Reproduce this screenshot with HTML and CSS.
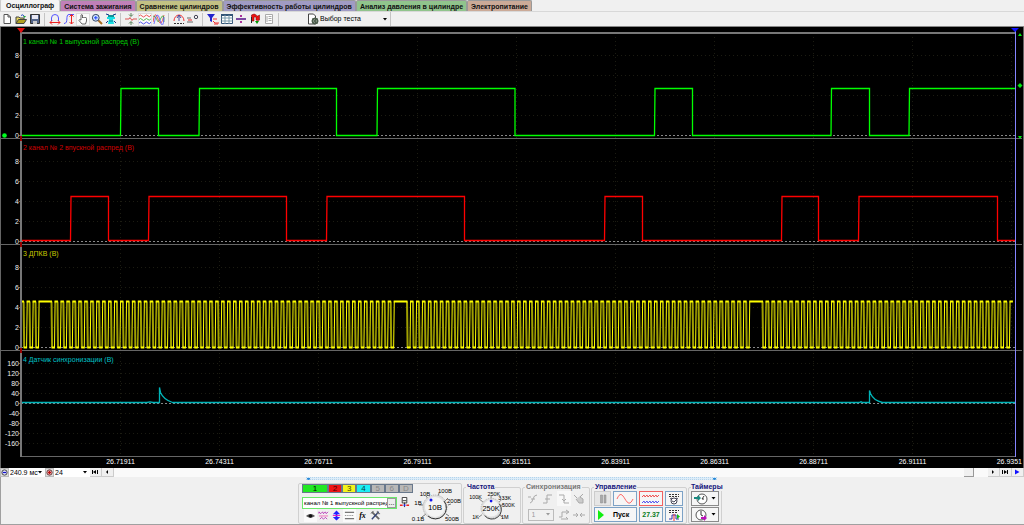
FILE: index.html
```html
<!DOCTYPE html>
<html lang="ru">
<head>
<meta charset="utf-8">
<title>Осциллограф</title>
<link rel="stylesheet" href="styles.css">
</head>
<body>
<nav class="tabs">
  <a href="#scope" class="tab tab-active">Осциллограф</a>
  <a href="#ignition" class="tab tab-pink">Система зажигания</a>
  <a href="#compare" class="tab tab-olive">Сравнение цилиндров</a>
  <a href="#efficiency" class="tab tab-violet">Эффективность работы цилиндров</a>
  <a href="#pressure" class="tab tab-green">Анализ давления в цилиндре</a>
  <a href="#power" class="tab tab-brown">Электропитание</a>
</nav>

<div class="toolbar">
  <div class="tool-group">
    <button class="tool" aria-label="Новый"><svg viewBox="0 0 12 12"><path d="M3 1.5h4l2.500 2.500v6.500H3z" fill="#fff" stroke="#555"/><path d="M7 1.500V4h2.500" fill="none" stroke="#555"/></svg></button>
    <button class="tool" aria-label="Открыть"><svg viewBox="0 0 12 12"><path d="M1 10.500V4h3l1 1h4v2" fill="#e8d860" stroke="#444"/><path d="M1 10.500L3.500 6.500H11.500L9 10.500z" fill="#b0a020" stroke="#444"/><path d="M6 2.500q2-2 3.500 1" fill="none" stroke="#2a50c0"/><path d="M8 3h3l-1.500 2z" fill="#20a040"/></svg></button>
    <button class="tool" aria-label="Сохранить"><svg viewBox="0 0 12 12"><path d="M1.500 1.500h9v9h-9z" fill="#53658a" stroke="#333"/><path d="M3 2h6v4H3z" fill="#e8e8f4"/><path d="M4 8h4v3H4z" fill="#ccc"/></svg></button>
  </div>
  <div class="tool-group">
    <button class="tool" aria-label="Горизонтальный масштаб"><svg viewBox="0 0 12 12"><path d="M2.500 8V5a3.500 3.500 0 0 1 7 0v3" fill="none" stroke="#55f"/><path d="M1 9.500h10M3 7.500l-2 2 2 2M9 7.500l2 2-2 2" fill="none" stroke="#e22"/></svg></button>
    <button class="tool" aria-label="Вертикальный масштаб"><svg viewBox="0 0 12 12"><path d="M1 10.500c5 0 1-9 5-9h5" fill="none" stroke="#55f"/><path d="M8.500 2v9M6.500 3.500l2-2 2 2M6.500 9l2 2 2-2" fill="none" stroke="#e22"/></svg></button>
    <button class="tool tool-pressed" aria-label="Рука"><svg viewBox="0 0 12 12"><path d="M4 7V2q1-1 1.500 0v3l1-1 1 1 1-1 1 1.500V8l-1 3H5L2 7.500q0-1.500 2-.5z" fill="#fff" stroke="#444" stroke-width=".8"/></svg></button>
    <button class="tool" aria-label="Лупа"><svg viewBox="0 0 12 12"><path d="M7 7l4 4" stroke="#a86b20" stroke-width="2"/><circle cx="4.800" cy="4.800" r="3.400" fill="#cfe6ff" stroke="#346"/><path d="M3 4.800h3.600M4.800 3v3.600" stroke="#24f"/></svg></button>
    <button class="tool" aria-label="Измерение"><svg viewBox="0 0 12 12"><path d="M1 1l3 1M11 1L8 2M1 10l2-2M11 10L9 8" stroke="#138"/><path d="M2 4h8v2H8l1 5H3l1-5H2z" fill="#19dfe5"/><path d="M3 2h6v2H3z" fill="#149298"/><path d="M4 8h4" stroke="#147a90"/></svg></button>
  </div>
  <div class="tool-group">
    <button class="tool" aria-label="Центрировать"><svg viewBox="0 0 12 12"><path d="M0 6h4l1-1.500 2 3L8 6h4" fill="none" stroke="#d55"/><path d="M6 0v3M4 1.500l2 2 2-2M6 12V9M4 10.500l2-2 2 2" fill="none" stroke="#363" stroke-width=".8"/></svg></button>
    <button class="tool tool-pressed" aria-label="Раздельно"><svg viewBox="0 0 12 12"><path d="M0 3q1.500-2 3 0t3 0 3 0 3-1" fill="none" stroke="#e55"/><path d="M0 6.500q1.500-2 3 0t3 0 3 0 3-1" fill="none" stroke="#5b5"/><path d="M0 10q1.500-2 3 0t3 0 3 0 3-1" fill="none" stroke="#55e"/></svg></button>
    <button class="tool" aria-label="Совместно"><svg viewBox="0 0 12 12"><g fill="none" stroke-width=".8"><path d="M0 9Q2-4 5 6t6-4" stroke="#e33"/><path d="M0 3q3 0 4 4t4-2 3 4" stroke="#3a3"/><path d="M1 11Q4-5 7 7t4-3" stroke="#55f"/></g></svg></button>
  </div>
  <div class="tool-group">
    <button class="tool" aria-label="Пик"><svg viewBox="0 0 12 12"><path d="M1 8a5 6 0 0 1 10 0" fill="none" stroke="#e33"/><path d="M6 2v6M4 5l2-3 2 3" fill="none" stroke="#449"/><path d="M1 10.500h10" stroke="#333" stroke-dasharray="2 1"/></svg></button>
    <button class="tool" aria-label="Ноль"><svg viewBox="0 0 12 12"><path d="M0 5h4M0 9h6" stroke="#444" stroke-width=".8"/><path d="M1 7h4" stroke="#e22"/><circle cx="9" cy="4" r="1.700" fill="none" stroke="#445"/></svg></button>
  </div>
  <div class="tool-group">
    <button class="tool" aria-label="Фильтр"><svg viewBox="0 0 12 12"><path d="M0 1h8L5 5v4L3 8V5z" fill="#22c"/><path d="M6 6h4M6 8l2 2h4M7 11h4" fill="none" stroke="#e33"/></svg></button>
    <button class="tool" aria-label="Таблица"><svg viewBox="0 0 12 12"><path d="M.5 1.500h11v9H.5z" fill="#fff" stroke="#357"/><path d="M0 2h12" stroke="#357" stroke-width="2"/><path d="M.5 5h11M.5 8h11M4 2v9M8 2v9" stroke="#79a"/></svg></button>
    <button class="tool" aria-label="Разделитель"><svg viewBox="0 0 12 12"><path d="M1 6h10" stroke="#518" stroke-width="1.500"/><path d="M6 2v2M6 8v2" stroke="#a39" stroke-width="2"/></svg></button>
    <button class="tool" aria-label="Метка"><svg viewBox="0 0 12 12"><path d="M2.500 8V2q3-2 4.500 0t3.500 0v5q-2 1-3.500 0V4H5v4z" fill="#e11" stroke="#811" stroke-width=".6"/><path d="M2.500 4v6" stroke="#222"/><path d="M6 8h4l-2 3z" fill="#090"/></svg></button>
    <button class="tool" aria-label="Отчёт"><svg viewBox="0 0 12 12"><path d="M2.500 1.500h7v9h-7z" fill="#fff" stroke="#aaa"/><path d="M5.500 3.500h3M5.500 5.500h3M5.500 7.500h3M4 3v6" stroke="#aaa"/></svg></button>
  </div>
  <div class="test-picker">
    <svg class="test-icon" viewBox="0 0 12 12"><path d="M1.500 1h5l2 2v8h-7z" fill="#fff" stroke="#444"/><circle cx="8" cy="8" r="2.500" fill="none" stroke="#454" stroke-width="1.500"/><path d="M8 4.500v7M4.500 8h7M5.500 5.500l5 5M10.500 5.500l-5 5" stroke="#565"/></svg>
    <span class="pick pick-test">
      <select class="plain-select" aria-label="Выбор теста"><option>Выбор теста</option></select>
      <svg class="caret" viewBox="0 0 4 3"><path d="M0 0h4L2 2.500z"/></svg>
    </span>
  </div>
</div>

<main class="scope" id="scope">
  <svg class="plot" id="plot" viewBox="0 0 1024 441" role="img" aria-label="Осциллограмма"></svg>
</main>

<div class="timebar">
  <button class="zoom-btn" aria-label="Уменьшить"><svg viewBox="0 0 8 8"><circle cx="4" cy="4" r="3" fill="#eef" stroke="#333"/><path d="M2 4h4" stroke="#11c" stroke-width="1.500"/></svg></button>
  <span class="pick pick-span"><select class="plain-select" aria-label="Развёртка"><option>240.9 мс</option></select><svg class="caret" viewBox="0 0 4 3"><path d="M0 0h4L2 2.500z"/></svg></span>
  <button class="zoom-btn" aria-label="Увеличить"><svg viewBox="0 0 8 8"><circle cx="4" cy="4" r="3" fill="#fdd" stroke="#522"/><path d="M2 4h4M4 2v4" stroke="#b11" stroke-width="1.500"/></svg></button>
  <span class="pick pick-span"><select class="plain-select" aria-label="Масштаб"><option>24</option></select><svg class="caret" viewBox="0 0 4 3"><path d="M0 0h4L2 2.500z"/></svg></span>
  <button class="nav-btn" aria-label="В начало"><svg viewBox="0 0 8 8"><path d="M1.500 2v4" stroke="#000"/><path d="M5 2L2 4l3 2z"/><path d="M6.500 2v4" stroke="#000"/></svg></button>
  <button class="nav-btn" aria-label="Назад"><svg viewBox="0 0 8 8"><path d="M5 2L3 4l2 2z"/></svg></button>
  <div class="track"><button class="thumb" aria-label="Положение"></button></div>
  <button class="nav-btn" aria-label="Вперёд"><svg viewBox="0 0 8 8"><path d="M3 2l2 2-2 2z"/></svg></button>
  <button class="nav-btn" aria-label="В конец"><svg viewBox="0 0 8 8"><path d="M1.500 2v4M6.500 2v4" stroke="#000"/><path d="M3 2l3 2-3 2z"/></svg></button>
  <button class="nav-btn" aria-label="Воспроизвести"><svg viewBox="0 0 8 8"><path d="M2 1.500L6.500 4 2 6.500z" fill="#11f"/></svg></button>
</div>

<footer class="dock">
  <div class="panels-wrap">
    <div class="grip"><i class="grip-mark"></i><i class="grip-mark"></i></div>
    <div class="panels">
      <section class="panel channel-panel">
        <div class="channel-left">
          <div class="channels">
            <button class="ch ch1">1</button><button class="ch ch2">2</button><button class="ch ch3">3</button><button class="ch ch4">4</button><button class="ch" disabled>5</button><button class="ch" disabled>6</button><button class="ch" disabled>D</button>
          </div>
          <div class="name-row">
            <div class="name-box">
              <input class="name-input" aria-label="Имя канала" value="канал № 1 выпускной распред">
              <button class="more">...</button>
            </div>
            <button class="mini" aria-label="Датчик"><svg viewBox="0 0 12 12"><path d="M3.500.5h5v6h-5z" fill="#fff" stroke="#333"/><path d="M4 4h4" stroke="#333"/><path d="M6 6v5" stroke="#333"/><path d="M1 9h3M8 9h3" stroke="#e22" stroke-width="1.500"/><path d="M5 9h2" stroke="#22e" stroke-width="2"/></svg></button>
          </div>
          <div class="mini-row">
            <button class="mini mini-on" aria-label="Видимость"><svg viewBox="0 0 12 12"><path d="M1 6.500q5-4.500 10 0-5 4-10 0z" fill="#555"/><circle cx="6" cy="6.500" r="2" fill="#111"/></svg></button>
            <button class="mini" aria-label="Сглаживание"><svg viewBox="0 0 12 12"><g fill="none" stroke-width=".8"><path d="M1 4V2l2 2 2-2 1 2 2-2 1 2 2-2" stroke="#a1a"/><path d="M1 6.500h10" stroke="#e4a"/><path d="M2 10l2-2 2 2 2-2 2 2" stroke="#a1a"/></g></svg></button>
            <button class="mini" aria-label="Инверсия"><svg viewBox="0 0 12 12"><path d="M2 4.500L6 .5l4 4zM2 7.500l4 4 4-4z" fill="#22f"/><path d="M6 2v8" stroke="#22f" stroke-width="2"/><path d="M2 6h8" stroke="#e1b"/></svg></button>
            <button class="mini mini-on" aria-label="Уровни"><svg viewBox="0 0 12 12"><path d="M1 2.500h10M1 9.500h10" stroke="#444"/><path d="M1 6h10" stroke="#777" stroke-dasharray="1 1"/></svg></button>
            <button class="mini fx">fx</button>
            <button class="mini" aria-label="Настройки"><svg viewBox="0 0 12 12"><path d="M2 2l8 8" stroke="#666" stroke-width="2"/><path d="M9.500 2L2 10" stroke="#347" stroke-width="1.500"/><path d="M1 4l3-3M8 1v3h3" fill="none" stroke="#666"/></svg></button>
          </div>
        </div>
        <svg class="dial" viewBox="0 0 48 38" role="img" aria-label="Диапазон 10В">
          <g class="dial-ticks"><path d="M9 32l4-3M6 20h4M13 11l3 4M26 8l-1 4M35 13l-3 3M38 19l-3 1M36 31l-3-2"/></g>
          <circle class="knob-rim" cx="22" cy="22" r="12"/><circle class="knob" cx="22" cy="22" r="10"/>
          <path class="knob-shade" d="M31 16a11 11 0 0 1-16 15"/>
          <circle class="pointer" cx="18" cy="15" r="1.500"/>
          <text x="22" y="25" class="dial-value">10В</text>
          <text x="5" y="36">0.1В</text><text x="5" y="20">1В</text><text x="12" y="11">10В</text><text x="32" y="8">100В</text><text x="41" y="18">200В</text><text x="39" y="36">500В</text>
        </svg>
      </section>

      <fieldset class="panel rate-panel">
        <legend>Частота</legend>
        <svg class="dial dial-rate" viewBox="0 0 52 34" role="img" aria-label="Частота 250K">
          <g class="dial-ticks"><path d="M11 29l4-3M11 8l5 4M25 5v4M36 10l-3 3M39 15l-4 1M38 29l-4-3"/></g>
          <circle class="knob-rim" cx="25" cy="19" r="11"/><circle class="knob" cx="25" cy="19" r="9"/>
          <path class="knob-shade" d="M34 14a10 10 0 0 1-16 13"/>
          <circle class="pointer" cx="25" cy="11" r="1.500"/>
          <text x="25" y="22" class="dial-value">250K</text>
          <text x="8" y="31">1K</text><text x="8" y="9">100K</text><text x="28" y="5">250K</text><text x="40" y="10">333K</text><text x="44" y="17">500K</text><text x="40" y="31">1M</text>
        </svg>
      </fieldset>

      <fieldset class="panel sync-panel" disabled>
        <legend>Синхронизация</legend>
        <div class="sync-grid">
          <button class="sync" aria-label="Авто"><svg viewBox="0 0 12 12"><path d="M1 4h3M3 10q2 0 3-4t4-4M4 6h4" fill="none" stroke="#aaa"/></svg></button>
          <button class="sync" aria-label="Фронт"><svg viewBox="0 0 12 12"><path d="M1 10h4V2h5M3 6h5" fill="none" stroke="#aaa"/></svg></button>
          <button class="sync sync-on" aria-label="Спад"><svg viewBox="0 0 12 12"><path d="M1 2h5v8h5M4 6l2 2 2-2" fill="none" stroke="#aaa"/></svg></button>
          <button class="sync" aria-label="Ручной"><svg viewBox="0 0 12 12"><path d="M1 2l3 3M3 6l3 4h4V6L7 4l3-3" fill="#ccc" stroke="#aaa"/></svg></button>
          <span class="pick pick-sync"><select class="plain-select sync-select" aria-label="Канал синхронизации"><option>1</option></select><svg class="caret caret-off" viewBox="0 0 4 3"><path d="M0 0h4L2 2.500z"/></svg></span>
          <button class="sync" aria-label="Уровень"><svg viewBox="0 0 12 12"><path d="M1 8h3V3h6M8 1l3 2-3 2M3 10h7M8 8l2 2" fill="none" stroke="#aaa"/></svg></button>
          <button class="sync" aria-label="Положение"><svg viewBox="0 0 12 12"><path d="M0 6h5M7 6h5M3 4l2 2-2 2M9 4L7 6l2 2" fill="none" stroke="#aaa"/></svg></button>
        </div>
      </fieldset>

      <fieldset class="panel control-panel">
        <legend>Управление</legend>
        <div class="control-grid">
          <button class="btn btn-off" aria-label="Пауза"><svg viewBox="0 0 12 10"><path d="M3.500 1h2v8h-2zM7 1h2v8H7z" fill="#aaa" stroke="#888" stroke-width=".5"/></svg></button>
          <button class="btn btn-blue" aria-label="Один сигнал"><svg class="wide" viewBox="0 0 20 12"><path d="M2 6c3-7 5-5 8 0s5 6 8 0" fill="none" stroke="#f66"/></svg></button>
          <button class="btn btn-red" aria-label="Два сигнала"><svg class="wide" viewBox="0 0 20 12"><path d="M1 4l2-2 1 2 2-2 1 2 2-2 1 2 2-2 1 2 2-2 1 2 2-2" fill="none" stroke="#e55"/><path d="M1 10l2-2 1 2 2-2 1 2 2-2 1 2 2-2 1 2 2-2 1 2 2-2" fill="none" stroke="#55e"/></svg></button>
          <button class="btn btn-blue" aria-label="Авто"><svg viewBox="0 0 12 12"><path d="M1 1.500h10M1 3.500h10" stroke="#333" stroke-dasharray="2 1"/><circle cx="6" cy="8" r="3" fill="#fff" stroke="#445"/><path d="M2 6l2-1M10 6L8 5M4 8l2 1 2-2" fill="none" stroke="#445"/></svg></button>
          <button class="btn btn-blue start"><svg viewBox="0 0 10 12"><path d="M2 1l6 5-6 5z" fill="#1e1"/></svg><span>Пуск</span></button>
          <output class="btn btn-blue clock">27.37</output>
          <button class="btn btn-blue" aria-label="Авто фронт"><svg viewBox="0 0 12 12"><path d="M1 1.500h10M1 3.500h8" stroke="#333" stroke-dasharray="2 1"/><path d="M1 10h3V6h4v4h3" fill="none" stroke="#33a"/><path d="M6 5v7" stroke="#e33"/><path d="M9 5l3 2.500L9 10z" fill="#1b1"/></svg></button>
        </div>
      </fieldset>

      <fieldset class="panel timer-panel">
        <legend>Таймеры</legend>
        <div class="timer-list">
          <button class="btn timer" aria-label="Таймер 1"><svg viewBox="0 0 14 12"><circle cx="8" cy="6" r="5" fill="#fff" stroke="#555"/><path d="M8 6l2-3M8 6h2" stroke="#333"/><path d="M0 4h4V2l3 3-3 3V6H0z" fill="#1a8a80"/></svg><svg class="caret" viewBox="0 0 4 3"><path d="M0 0h4L2 2.500z"/></svg></button>
          <button class="btn timer" aria-label="Таймер 2"><svg viewBox="0 0 14 12"><circle cx="7" cy="6" r="5" fill="#fff" stroke="#555"/><path d="M7 6V2M7 6l2 1" stroke="#333"/><path d="M7 8h3V6l3 3-3 3v-2H7z" fill="#b1b"/></svg><svg class="caret" viewBox="0 0 4 3"><path d="M0 0h4L2 2.500z"/></svg></button>
        </div>
      </fieldset>
    </div>
  </div>
</footer>
<script src="scope.js"></script>
</body>
</html>
```
FILE: styles.css
```css
* { box-sizing: border-box; }

body {
  margin: 0;
  min-height: 100vh;
  display: flex;
  flex-direction: column;
  background: #f0f0f0;
  color: #000;
  font: 7px/8px "Liberation Sans", Arial, sans-serif;
}

button, select, input {
  margin: 0;
  padding: 0;
  border: 0;
  border-radius: 0;
  background: none;
  color: inherit;
  font: inherit;
}

svg { display: block; fill: #000; }

.tabs {
  display: flex;
  align-items: flex-end;
  height: 12px;
  background: #f0f0f0;
  border-bottom: 1px solid #d8d8d8;
}
.tab {
  height: 11px;
  padding: 0 3px;
  border: 1px solid #999;
  border-bottom: 0;
  border-radius: 2px 2px 0 0;
  color: #111;
  font: bold 7px/11px "Liberation Sans", Arial, sans-serif;
  text-decoration: none;
  white-space: nowrap;
}
.tab-active { height: 12px; padding: 0 5px; background: #f4f4f4; border-color: #ccc; }
.tab-pink { background: #c080b8; }
.tab-olive { background: #c3c183; }
.tab-violet { background: #a09bc4; }
.tab-green { background: #90c48c; }
.tab-brown { background: #cbaa97; }

.toolbar {
  display: flex;
  align-items: center;
  height: 15px;
  border-bottom: 1px solid #888;
}
.tool-group {
  display: flex;
  padding-right: 2px;
  border-right: 1px solid #c4c4c4;
  margin-right: 3px;
}
.tool { width: 14px; height: 13px; padding: 0 1px; }
.tool svg { width: 12px; height: 12px; }
.tool-pressed { background: #fafafa; outline: 1px solid #ddd; outline-offset: -1px; }
.test-picker {
  display: flex;
  align-items: center;
  gap: 1px;
  height: 14px;
  padding-left: 25px;
  border-right: 1px solid #c4c4c4;
}
.test-icon { width: 12px; height: 12px; }

.pick { display: grid; align-items: center; }
.pick > * { grid-area: 1 / 1; }
.plain-select { appearance: none; width: 100%; height: 9px; }
.caret { width: 4px; height: 3px; justify-self: end; margin-right: 3px; pointer-events: none; }
.caret-off { fill: #999; }
.pick-test { width: 70px; }

.scope { background: #000; }
.plot { width: 100%; height: auto; font-family: "Liberation Sans", Arial, sans-serif; font-size: 7px; }
.crisp { shape-rendering: crispEdges; }
.grid-line { stroke: #1c1c12; stroke-dasharray: 1 3; }
.zero-line { stroke: #888; stroke-dasharray: 2 2; }
.frame-line { stroke: #666; }
.axis { stroke: #777; stroke-width: 2; }
.cursor { stroke: #8484ff; }
.scale { fill: #eee; text-anchor: end; }
.time { fill: #fff; text-anchor: middle; }
.time-last { fill: #fff; text-anchor: end; }
.wave { fill: none; }
.wave-fall { stroke: #a0a000; stroke-width: 2; }
.wave-rise { stroke: #ffff00; stroke-width: 1; }
.wave-flat { stroke: #ffff00; stroke-width: 2; }

.timebar { display: flex; align-items: center; height: 9px; background: #fafafa; }
.zoom-btn { width: 9px; height: 9px; background: #ddd; border: 1px solid #bbb; }
.zoom-btn svg { width: 7px; height: 7px; }
.pick-span { width: 36px; padding-left: 1px; background: #fff; }
.nav-btn { width: 12px; height: 9px; padding: 0 1px; background: #f0f0f0; border: 1px solid #ccc; border-width: 0 1px 1px 0; }
.nav-btn svg { width: 8px; height: 8px; }
.track { flex: 1; display: flex; justify-content: flex-end; padding-right: 14px; }
.thumb { width: 10px; height: 9px; background: #f0f0f0; border: 1px solid #999; border-width: 0 1px 1px 0; }

.dock {
  flex: 1;
  display: flex;
  justify-content: center;
  padding-right: 5px;
  border-left: 1px solid #a0a0a0;
  border-bottom: 1px solid #a0a0a0;
}
.panels-wrap { display: flex; flex-direction: column; }
.grip {
  display: flex;
  justify-content: space-between;
  height: 3px;
  margin: 0 5px 3px 8px;
  border: 1px dotted #b4d4ec;
  background: #dcecf8;
}
.grip-mark { width: 3px; height: 2px; background: #2a8ad8; border-radius: 0 0 2px 2px; }
.panels { display: flex; align-items: stretch; gap: 1px; flex: 1; }
.panel { min-width: 0; margin: 0; padding: 0 2px; border: 1px solid #d0d0d0; border-radius: 2px; }
.panel legend {
  height: 8px;
  padding: 0 1px;
  color: #14147c;
  font: bold 7px/8px "Liberation Sans", Arial, sans-serif;
}

.channel-panel { display: flex; width: 164px; padding: 0 0 0 3px; }
.channel-left { flex: none; width: 111px; }
.channels { display: flex; }
.ch {
  flex: 1;
  height: 9px;
  background: #b8b8b8;
  border: 1px solid #68788c;
  color: #888;
  font-size: 8px;
  line-height: 7px;
}
.ch1 { flex: 0 0 26px; background: #22e822; color: #000; }
.ch2 { background: #f01414; color: #400; }
.ch3 { background: #f4f41c; color: #440; }
.ch4 { background: #1ceef4; color: #044; }
.name-row { display: flex; align-items: center; gap: 1px; margin-top: 3px; }
.name-box { display: flex; width: 95px; height: 12px; border: 1px solid #6be86b; background: #fff; }
.name-input { flex: 1; min-width: 0; padding-left: 1px; font-size: 6px; }
.more { width: 9px; background: #eee; border: 1px solid #999; line-height: 5px; }
.mini { width: 13px; height: 13px; padding: 1px; }
.mini svg { width: 11px; height: 11px; }
.mini-row { display: flex; padding-left: 2px; }
.mini-on { background: #fafafa; }
.fx { font: italic bold 8px/10px "Liberation Serif", serif; }

.dial { flex: none; width: 48px; height: 38px; overflow: visible; align-self: center; font-size: 6px; }
.dial text { text-anchor: middle; }
.dial .dial-value { font-size: 8px; }
.dial-ticks { fill: none; stroke: #777; }
.knob-rim { fill: #e0e0e0; stroke: #aaa; stroke-dasharray: 1 1; }
.knob { fill: #f4f4f4; }
.knob-shade { fill: none; stroke: #333; }
.pointer { fill: #11e; }
.rate-panel { width: 58px; }
.dial-rate { width: 52px; height: 31px; }

.sync-panel { width: 68px; }
.panel.sync-panel legend { color: #777; }
.sync-grid { display: grid; grid-template-columns: repeat(4, 1fr); align-items: center; justify-items: center; row-gap: 1px; }
.sync { width: 14px; height: 15px; padding: 2px 1px; }
.sync svg { width: 12px; height: 12px; }
.sync-on { background: #f8f8f8; }
.pick-sync { grid-column: span 2; width: 26px; border: 1px solid #bbb; }
.sync-select { height: 10px; padding-left: 3px; color: #777; }

.control-panel { width: 96px; }
.control-grid { display: grid; grid-template-columns: 17px 24px 24px 18px; gap: 1px 2px; }
.btn {
  display: flex;
  align-items: center;
  justify-content: center;
  height: 15px;
  border: 1px solid #8a8a8a;
  background: #f6f6f6;
}
.btn svg { width: 12px; height: 12px; }
.btn svg.wide { width: 20px; height: 12px; }
.btn-off { background: #e6e6e6; border-color: #ccc; }
.btn-blue { border-color: #7da2c6; }
.btn-red { border-color: #f06060; }
.start { grid-column: span 2; justify-content: flex-start; gap: 6px; font-weight: bold; }
.clock { color: #0a7a1a; font-weight: bold; }
.timer-panel { width: 34px; }
.timer-panel legend { white-space: nowrap; padding: 0; }
.timer-list { display: grid; gap: 1px; }
.timer { gap: 3px; }
.timer svg { width: 14px; }
.timer .caret { width: 5px; height: 3px; margin: 0; }
```
FILE: scope.js
```js
const plot = document.getElementById('plot');
const NS = 'http://www.w3.org/2000/svg';
const LEFT = 21;
const RIGHT = 1015;

function add(tag, attrs, text) {
  const node = document.createElementNS(NS, tag);
  for (const key in attrs) node.setAttribute(key, attrs[key]);
  if (text !== undefined) node.textContent = text;
  plot.appendChild(node);
}
function line(x1, y1, x2, y2, cls) {
  add('path', { d: `M${x1} ${y1}L${x2} ${y2}`, class: cls });
}

const channels = [
  { title: '1 канал № 1 выпускной распред (В)', color: '#00c800', top: 5, zero: 108, labels: [8, 6, 4, 2, 0], step: 10 },
  { title: '2 канал № 2 впускной распред (В)', color: '#d00000', top: 111, zero: 214, labels: [8, 6, 4, 2, 0], step: 10 },
  { title: '3 ДПКВ (В)', color: '#c8c800', top: 217, zero: 320, labels: [8, 6, 4, 2, 0], step: 10 },
  { title: '4 Датчик синхронизации (В)', color: '#00c0c8', top: 323, zero: 376, labels: [160, 120, 80, 40, 0, -40, -80, -120, -160], step: 0.25 }
];

for (let i = 0; i < 10; i++) {
  const x = 120.5 + i * 99;
  line(x, 6, x, 429, 'grid-line crisp');
  if (i < 9) add('text', { x: x, y: 437, class: 'time' }, (26.71911 + i * 0.024).toFixed(5));
}
add('text', { x: 1022, y: 437, class: 'time-last' }, '26.9351');

for (const ch of channels) {
  for (const value of ch.labels) {
    const y = ch.zero - value * ch.step + 0.5;
    line(LEFT, y, RIGHT, y, value === 0 ? 'zero-line crisp' : 'grid-line crisp');
    line(19, y, 22, y, 'frame-line crisp');
    add('text', { x: 19, y: y + 2, class: 'scale' }, value);
  }
  add('text', { x: 23, y: ch.top + 12, fill: ch.color }, ch.title);
}

function square(edges, low, high, endsHigh, color) {
  let d = `M${LEFT} ${low}`;
  edges.forEach((x, i) => {
    d += i % 2 ? `V${low}` : `H${x - 0.5}L${x} ${high}H${edges[i + 1] || RIGHT}`;
  });
  if (!endsHigh) d += `H${RIGHT}`;
  add('path', { d, class: 'wave', stroke: color, 'stroke-width': 1.3 });
}
square([121, 158.5, 199.5, 336.5, 377.5, 515, 655, 692.5, 831.5, 869.5, 909.5], 108.5, 61.5, true, '#00ff00');
square([71, 108.5, 149, 286.5, 327, 464.5, 605, 642.5, 782, 818.5, 859, 997.5], 213.5, 169.5, false, '#ff0000');

/* Crankshaft wheel: 58 teeth, then a gap of two */
const PITCH = 5.95;
const HIGH = 274.5;
const LOW = 320.5;
let fallPath = '';
let risePath = '';
let flatPath = `M${LEFT} ${HIGH}H24`;
function tooth(fall, nextFall) {
  const rise = fall + 3;
  fallPath += `M${fall} ${HIGH}L${fall + 0.6} ${LOW}`;
  risePath += `M${rise} ${LOW}L${rise + 0.6} ${HIGH}`;
  flatPath += `M${fall} ${LOW}H${rise + 0.5}M${rise} ${HIGH}H${nextFall + 0.5}`;
}
for (let k = 2; k >= 0; k--) {
  const fall = 35.5 - k * PITCH;
  tooth(fall, k ? fall + PITCH : 51.5);
}
for (let turn = 0; turn < 3; turn++) {
  const start = 51.5 + turn * 355.5;
  for (let k = 0; k < 58; k++) {
    const fall = start + k * PITCH;
    if (fall > RIGHT - 3) break;
    tooth(fall, Math.min(k < 57 ? fall + PITCH : start + 355.5, RIGHT));
  }
}
add('path', { d: fallPath, class: 'wave wave-fall' });
add('path', { d: risePath, class: 'wave wave-rise' });
add('path', { d: flatPath, class: 'wave wave-flat' });

add('path', {
  d: `M${LEFT} 375.500H147l3-.7 3 .7h6.500V360.500l1 5q3 7 12 10H859l2-.7 2 .7h6.500V363.500l1 3q3 7 12 9H${RIGHT}`,
  class: 'wave', stroke: '#00b4b8', 'stroke-width': 1.3
});

line(LEFT, 5.5, RIGHT, 5.5, 'axis crisp');
for (const y of [111.5, 217.5, 323.5]) line(0, y, 1022, y, 'frame-line crisp');
line(LEFT, 429.5, RIGHT, 429.5, 'frame-line crisp');
line(0.5, 0, 0.5, 441, 'frame-line crisp');
line(1023.5, 0, 1023.5, 441, 'frame-line crisp');
line(21, 5, 21, 430, 'axis crisp');
line(1015.5, 2, 1015.5, 430, 'cursor crisp');
for (const y of [109, 215, 321]) add('rect', { x: 20, y: y, width: 2, height: 5, fill: '#900' });
add('path', { d: 'M17 1h8l-4 5z', fill: '#e01010' });
add('path', { d: 'M1011 1h8l-4 4z', fill: '#1010ff' });
add('circle', { cx: 4.5, cy: 108.5, r: 2.3, fill: '#00ff20' });
add('path', { d: 'M1018 9l2-3 2 3zM1017.500 58.500l2.500-2.500 2.500 2.500-2.500 2.500zM1018 109l2 3 2-3z', fill: '#00e810' });
```
